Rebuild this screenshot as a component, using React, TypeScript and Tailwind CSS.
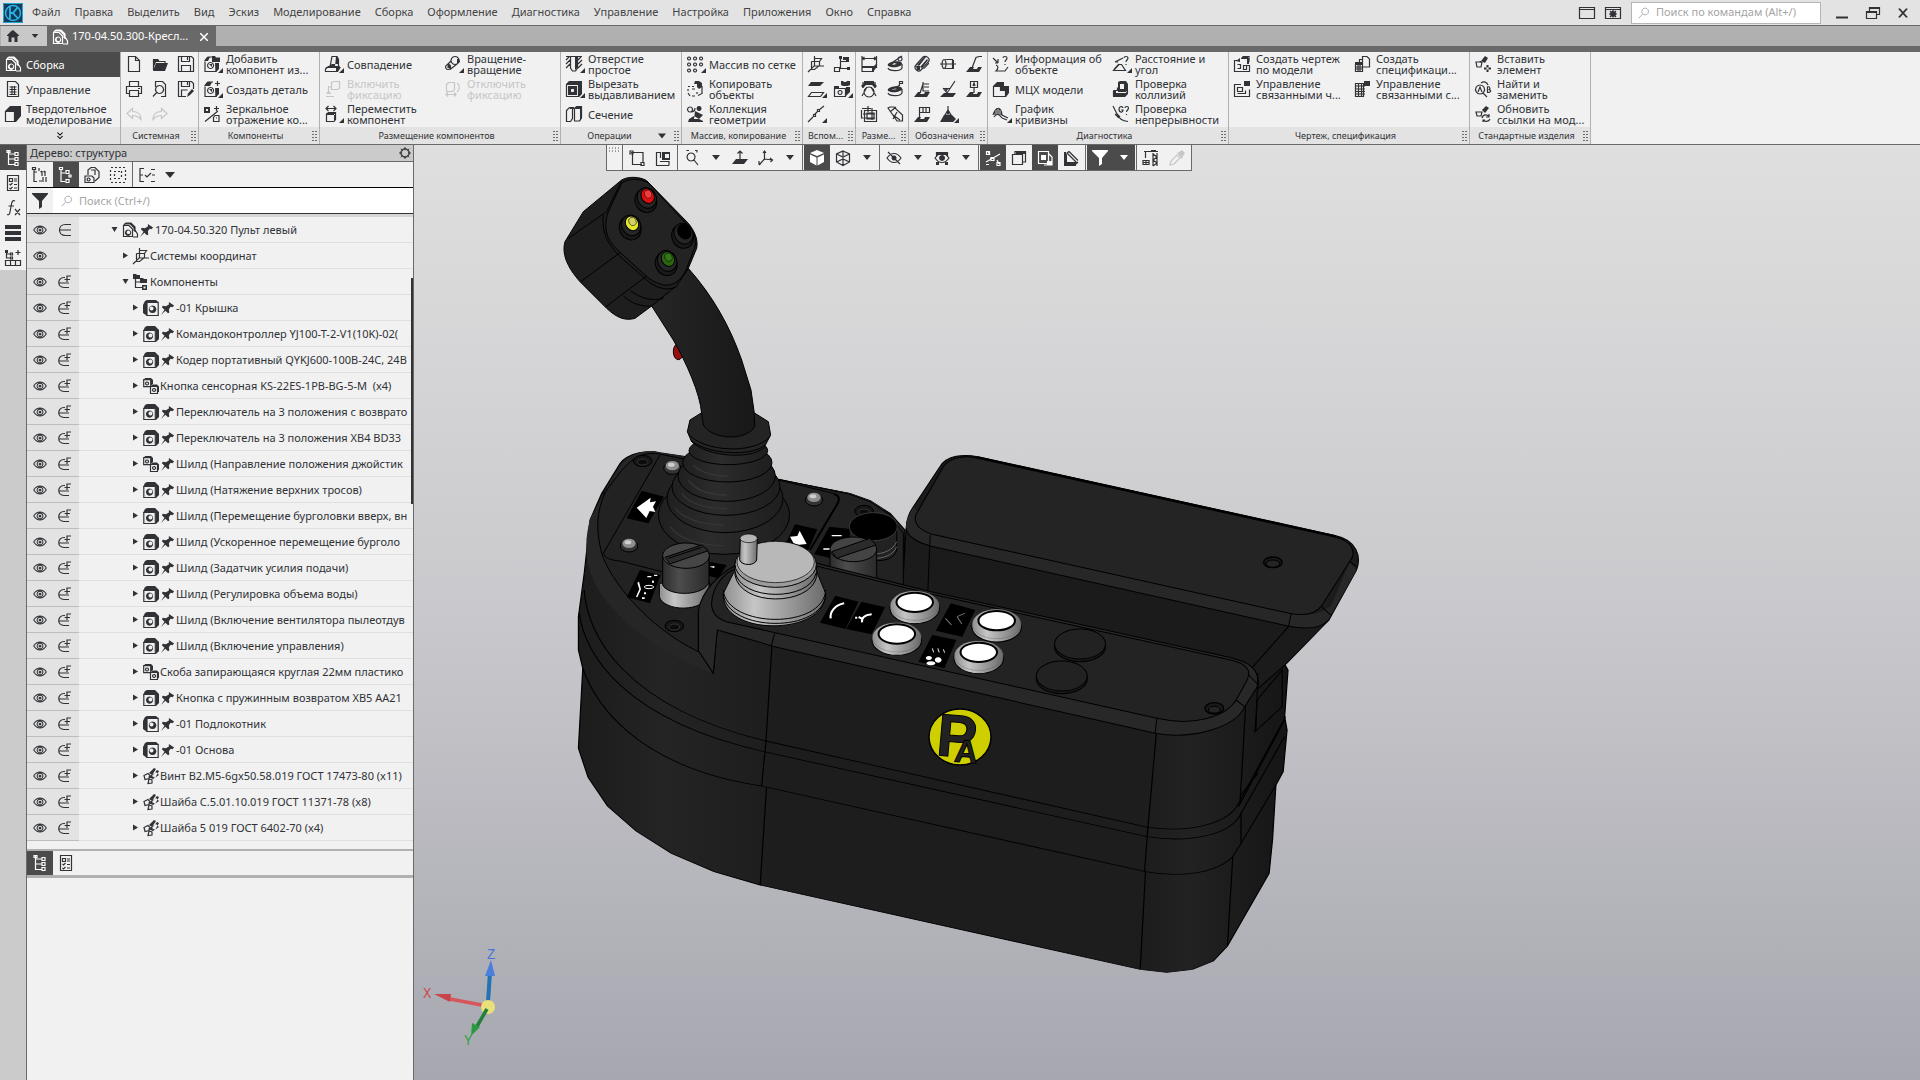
import React from 'react';
import { clsx } from 'clsx';

interface Glyph {
  s?: string;
  f?: string;
}

// s is stroked, f is filled, both on a 16x16 grid
const glyphs: Record<string, Glyph> = {
  assembly: { s: 'M1.5 3.5v11h9V7l-3.5-3.5zM1.5 3.5L4 1h5l4 4v5M13 8l2.5 4v3H11', f: 'M6 7.5a3.2 3.2 0 1 0 .1 0zM6.5 8.5a1.8 1.8 0 1 1-.1 0zM3 1h6l4 4v4h-1.5V6L8 2.5H2z' },
  sheet: { s: 'M2.5.5h8l3 3v12h-11zM4.5 6h7M4.5 8.5h7M4.5 11h7M4.5 13.5h7M7 5v9M9.5 5v9' },
  solid: { s: 'M.5 5.5h9v10h-9z', f: 'M0 5l5-5h11v10l-5 6H10V5z' },
  fileNew: { s: 'M2.5.5h7l4 4v11h-11zM9.5.5v4h4' },
  folder: { s: 'M1.5 14V3.5h4l1.5 2h6V8', f: 'M1 15L4 7h12l-3 8zM1 3h5l2 3H4L1 13z' },
  save: { s: 'M.5.5h13l2 2v13H.5zM3.5.5v5h8v-5M9.5 1v3M3.5 15.5v-6h9v6' },
  print: { s: 'M3.5 5V.5h9V5M3.5 12.5h-3v-7h15v7h-3M3.5 9.5h9v6h-9zM12 7.5h2' },
  preview: { s: 'M3.5 6V.5h7l3 3v12H9M7.5 4.5a4 4 0 1 0 .1 0zM5 11l-4 4.5' },
  saveAs: { s: 'M15.5 8V2.5l-2-2H.5v15H8M3.5.5v5h8v-5M3.5 15v-6h6M9.5 1v3', f: 'M9 16l1-3.5L14 8l2 2-4 4z' },
  undo: { s: 'M6.5 2.5L1 7.5l5.5 5V9.5c4 0 6 1 8.5 4 0-5-3-8-8.5-8z' },
  redo: { s: 'M9.5 2.5l5.5 5-5.5 5V9.5c-4 0-6 1-8.5 4 0-5 3-8 8.5-8z' },
  addPart: { s: 'M1 5.5v10h11V7M2 4l2-3h4M6.5 6.5a3 3 0 1 0 .1 0z', f: 'M8 0h3l1 1.5h4V6H8zM11 7h4v6l-3 3zM0 5l3-4h3L4 5zM5 8h3v3z' },
  newPart: { s: 'M1 5.5v10h11V9M2 4l2-3h5M6.5 6.5a3 3 0 1 0 .1 0zM13.5 0v5M11 2.5h5', f: 'M11 7h4v6l-3 3zM0 5l3-4h5L6 5zM5 8h3v3z' },
  mirror: { s: 'M1 15.5L14 5M12.5 0v5M10 2.5h5M9.5 15.5v-4l1.5-2h4v6zM12 12h1', f: 'M0 1h6v6H0zM2 3h2v2H2z' },
  coincide: { s: 'M5 11L7 .5h5l1.5 3V11M.5 13l3-2.5h9l2.5 1-2.5 4H.5z', f: 'M0 12l4-2 3-2h6l2 3-3 5h-1v-4zM11 1h2v9h-3z' },
  rotate: { s: 'M10 .5a4 4 0 1 0 .1 0zM3 8.5a2.5 2.5 0 1 0 .1 0zM6 5L2 9M12 8l-7 5.5', f: 'M2.5 8.5h3V12h-3zM12 3h2l1 3-3 2z' },
  fixOn: { s: 'M6.5 1.5l2-1h6v7l-2 1h-6zM3.5 5v8M1 15.5h8M1.5 13l2-2.5L6 13M3.5 6h3' },
  fixOff: { s: 'M1.5 3.5l2-2h6v7l-2 2h-6zM1 13.5h10M3 11.5l-2 2 2 2M9 11.5l2 2-2 2M12 2c3 2 3 6 0 9' },
  move: { s: 'M1 2.5h10M3.5 0L1 2.5 3.5 5M8.5 0L11 2.5 8.5 5M1.5 8l2-1.5h7v7L9 15.5H1.5z', f: 'M2 7h8v2H2zM9 8h2v5l-2 2z' },
  hole: { s: 'M0 .5h16M4.5 1v11l2 3h3l2-3V1M0 4l3-3M0 8l4-4M0 12l4-4M12 4l3-3M12 8l4-4M12 12l4-4', f: 'M9 1h2v11l-2 2z' },
  cut: { s: 'M.5 3.5h12v12H.5zM4.5 7.5h4v4h-4z', f: 'M0 3l3-3h13v13l-3 3V3zM2 5h9v9H2zm2 2v5h5V7z' },
  section: { s: 'M.5 4.5l3-3h3v11l-2 3h-4zM8.5 2.5l2-2h5v11l-2 3.5h-5z', f: 'M4 1h4v2H4zM10 1h6v11l-2 3V3h-5z' },
  grid: { s: 'M2 1a1.5 1.5 0 1 0 .1 0zM8 1a1.5 1.5 0 1 0 .1 0zM14 1a1.5 1.5 0 1 0 .1 0zM2 7a1.5 1.5 0 1 0 .1 0zM8 7a1.5 1.5 0 1 0 .1 0zM14 7a1.5 1.5 0 1 0 .1 0zM2 13a1.5 1.5 0 1 0 .1 0zM8 13a1.5 1.5 0 1 0 .1 0z' },
  copy: { s: 'M1 5.5h2M5 5.5h2M1 8v2M1 12l2 3M5 15h3M10 13v-2M8 8H5M10 5.5h5v7l-4 2', f: 'M8 0h4l3 2v4l-3 2-2-2V3H7z' },
  collection: { s: 'M3 1a2.5 2.5 0 1 0 .1 0zM4 6c3 0 4-2 4-4', f: 'M12 0a2.5 2.5 0 1 0 .1 0zM8 5l8 4-4 4H7zM2 13l5-3 5 3 4 2v1H1z' },
  axes: { s: 'M6.5 0v10M0 16l6-6h10M3.5 5.5h8l2-3h-7M11.5 5.5v4l-5 4h-3v-8' },
  csys: { s: 'M6.5 2v10M6.5 5.5H13M.5 11.5h5v4h-5zM6 12.5h9', f: 'M9 1h6v5h-3V4H9zM5 0h3v3H5zM13 11h3v3h-3z' },
  plane: { s: 'M3.5 11.5h12l-3 4H.5z', f: 'M3 1h13l-4 4H0z' },
  partIn: { s: 'M.5 7.5h11v8H.5zM6 9.5a2 2 0 1 0 .1 0z', f: 'M7 0h2l1 1h2l1-1h3v4l-2 1H9L7 4zM0 5h5v3H0zM12 6h4v5l-4 4z' },
  spline: { s: 'M0 16l5-5M6.5 8.5l3-3M11 4l5-4M5.5 8.5h2v2h-2zM9.5 3.5h2v2h-2z' },
  dim: { s: 'M1 0v15.5h12M15.5 0v12M1 2.5h14M3.5 1L1.5 2.5 3.5 4M13 1l2 1.5L13 4', f: 'M1 10h12l2-2v4l-3 4h-1v-4H1z' },
  diam: { s: 'M1 12c1 3 12 4 14 0V8M6 6l9-6M13 1a2 2 0 1 0 .1 0z', f: 'M1 8c2-3 12-4 14-1 1 3-6 5-11 4-2-.5-4-1-3-3zm4 1l5-1-3-1z' },
  angle: { s: 'M1 15l5-9M15 15L10 6M8 6a5 5 0 1 0 .1 0zM2 1v6M14 1v6', f: 'M3 0h10v2l3 3-2 2-3-3H5L2 7 0 5l3-3z' },
  radius: { s: 'M1 12c1 3 12 4 14 0V8M6 8l7-4M12.5 5V.5h3v2h-3', f: 'M1 8c2-3 12-4 14-1 1 3-6 5-11 4-2-.5-4-1-3-3zm4 1l5-1-3-1z' },
  dimBox: { s: 'M1 2.5h9M.5 4v8h2M3.5 4.5h12v11h-12zM6 7h7v6H6zM2 8h12M11 2v12M4 12h10M7 0v6' },
  wedge: { s: 'M1 2l9 13h5.5V9L7 1H3zM3 6L9 1M6 9l7 5M10 6l-4 7' },
  thread: { s: 'M2 9L9 1c3-2 7 1 6 4l-8 9c-3 3-8-2-5-5z', f: 'M3 9l7-8h2L5 10zM6 11l7-8 1 1-6 8zM9 13l6-7v2l-5 5zM2 10h4v4H3z' },
  axial: { s: 'M5.5 3.5h7v9h-7M0 8h16M4 3.5a2 4.5 0 1 0 .1 0z', f: 'M12 4h2v9h-2z' },
  leader: { s: 'M6 12l4-10.5L13 .5h3', f: 'M4 11h4l-1 2h4l1-2h4l-3 5H0z' },
  base: { s: 'M6 12l3-9h6M10 6h5M9 1v9h6', f: 'M4 11h3l-1 2h4l1-2h5l-3 5H0z' },
  rough: { s: 'M3 7l4 5 8-12M3 7.5h7', f: 'M4 12h12l-3 4H0zM5 8h3l-2 3z' },
  datum: { s: 'M4.5.5h7v6h-7zM8 7v5M7 4.5h2M7 5l1-3 1 3', f: 'M4 11h4l-1 2h4l1-2h4l-3 5H0z' },
  gdt: { s: 'M5.5 1.5h10v5h-10zM9 2v4M12 2v4M5.5 6v6', f: 'M4 11h3l-1 2h4l1-2h5l-3 5H0z' },
  weld: { s: 'M8 0v5M5 9l3-5 3 5z', f: 'M4 9h8l4 4-3 3H0zM7 5h2v3H7z' },
  info: { s: 'M0 2l5 5M5 7V3M5 7H2M10 2c0-2 4-2 4 0 0 2-2 2-2 4M12 8v1M3 9c3 1 2 4 0 6h9l3-4' },
  mcx: { s: 'M.5 5.5h7v4h5v6H.5z', f: 'M0 5l4-4h7v4h5v7l-3 4V9H8V5z' },
  curve: { s: 'M0 9c3-9 8-9 9 0l6 3M2 9V5M4 8V2M6 9V3M8 9V5M1 11c3-4 5-3 8 1M9 12l5 2' },
  measure: { s: 'M2 6l8-4M2 6h3M1 13.5L6 8M.5 14.5h12l-4-6H6zM11 2c0-2 4-2 4 0 0 2-2 2-2 4M13 8v1' },
  collision: { s: 'M.5 9.5h4v-3M.5 9.5v5h11l3-3V9', f: 'M5 1l2-1h6l2 3v6l-2 2H5zm2 2v5h4V3zM0 10h3v2h10l2-2v3l-3 3H0z' },
  continuity: { s: 'M0 0l4 8c2 5 6 7 11 7.5M2 8l4 4M4 8l3 3M10 2c0-2-4-2-4 1 0 4 4 4 4 1H8M12 2c0-2 3.5-2 3.5 0 0 2-2 2-2 4M13.5 8v1' },
  drawing: { s: 'M5.5 4.5H.5v11h15v-6h-4M3.5 12.5h3v-4h-3M9.5 9.5h3v4h-3zM7.5 2.5l2-2h5.5v5l-1.5 2', f: 'M7 3h6v5h2V2h-1V0H9zM2 5l4-3v4z' },
  linked: { s: 'M7 3.5H.5v12h15v-7M3.5 6.5h5v4h-5zM11.5 9.5v3h-8', f: 'M10 0h6v5h-6z' },
  spec: { s: 'M8 3.5H5.5V6M8.5 8.5h-7v7h7zM8.5.5H13l2.5 2.5v8h-7zM1.5 11h7M1.5 13h7M4 9v6M6 9v6', f: 'M1 6h7v3H1z' },
  specLink: { s: 'M1.5 2.5h8v13h-8zM2 5h9M2 8h9M2 10.5h9M2 13h9M4.5 3v12M7.5 3v12', f: 'M10 0h6v5h-6z' },
  insert: { s: 'M1 6h6l-1 5H2z', f: 'M6 5l4-5 3 2-3 5zM11.5 9h2v7h-2zM9 11.5h7v2H9zM4 5h3l-1 2z' },
  find: { s: 'M5 4a4.5 4.5 0 1 0 .1 0zM3 11l2-5 2 5M8 12l4 4M12.5 5.5v6c4 0 4-3 1-3 2 0 2-3-1-3M6 2c3-2 6-1 7 2' },
  refresh: { s: 'M1 6h6l-1 4H2zM7 12c1-4 6-4 7-1M15 13c-1 3-6 3-7 1M14 8v3h-3M8 16v-2h2', f: 'M7 4l4-4 3 2-4 5z' },
  tree: { s: 'M3.5 1v14M3.5 4h6M3.5 9h6M3.5 14.5h6M2 .5h3v2H2zM10 2.5h3v3h-3zM10 7.5h3v3h-3zM10 12.5h3v3h-3z' },
  props: { s: 'M2.5.5h11v15h-11zM4.5 3.5h3v3h-3zM9 4h3M9 6h3M4.5 9l1 1 2-2M9 9.5h3M4.5 13l1 1 2-2M9 13h3' },
  numTree: { s: 'M2 2v12.5h3M2 5h3M.5.5h3v2h-3zM7 1v3M10 4v5M13 4v5M14 10v5M7 14h3M11 10v5M8.5 5l1.5-1M11.5 5l1.5-1' },
  lineTree: { s: 'M3 2v12.5h4M3 6h4M1.5.5h3v2h-3zM8 3.5h3v3H8zM11 8h2v2h-2zM8 12.5h3v3H8z' },
  parts: { s: 'M1 15.5V9h7l2 2v4.5zM4 8V3l3-2.5h4l4 4v6L11 14M7 3h4v5M4.5 11a1.5 1.5 0 1 0 .1 0z' },
  dashBox: { s: 'M1 .5h2M5 .5h2M9 .5h2M13 .5h2M1 15.5h2M5 15.5h2M9 15.5h2M13 15.5h2M.5 3v2M.5 7v2M.5 11v2M15.5 3v2M15.5 7v2M15.5 11v2M4 4.5h2M8 4.5h2M4 11.5h2M8 11.5h2M4.5 7v2M11.5 4v2M11.5 8v2' },
  checks: { s: 'M1 1v14M1 1.5h4M1 8h3M1 14.5h4M6 8l2 2 4-4M12 2.5h4M13 8h3M12 14.5h4' },
  fx: { s: 'M10 1c-2-1-3 0-3.5 3L5 12c-.5 3-1.5 3-3 2.5M3.5 6H9M10 9l5 6M15 9l-5 6' },
  bars: { f: 'M0 0h16v4H0zM0 6h16v4H0zM0 12h16v4H0z' },
  treePlus: { s: 'M1.5 1v7h4M1.5 4h4M13 0v5M10.5 2.5h5M.5 10.5h15v5H.5zM5.5 11v4M10.5 11v4M5.5 3h2v2h-2zM5.5 7h2v2h-2z', f: 'M0 0h3v3H0z' },
  filter: { f: 'M0 0h16v1L10 8v6l-3 2V8L0 1z' },
  search: { s: 'M9.5 1.5a4.5 4.5 0 1 0 .1 0zM6 9.5L1 15' },
  gear: { s: 'M8 3a5 5 0 1 0 .1 0zM8 2.2a5.8 5.8 0 1 0 .1 0zM8 0v3M8 13v3M0 8h3M13 8h3M2.3 2.3l2.2 2.2M11.5 11.5l2.2 2.2M13.7 2.3l-2.2 2.2M4.5 11.5l-2.2 2.2' },
  eye: { s: 'M.8 8c4-6 10.4-6 14.4 0-4 6-10.4 6-14.4 0zM8 4.7a3.3 3.3 0 1 0 .1 0z', f: 'M8 6.5a1.6 1.6 0 1 0 .1 0z' },
  eyeOff: { s: 'M1 8c4-6 10-6 14 0-4 6-10 6-14 0zM2 2l12 12', f: 'M8 5.5a2.5 2.5 0 1 0 .1 0z' },
  eyeBox: { s: 'M1 8c4-6 10-6 14 0-4 6-10 6-14 0zM2.5 7V2.5h11V7M2 14h3M11 14h3', f: 'M8 5a3 3 0 1 0 .1 0zM2 2h12v3H2zM2 12h3v3H2zM11 12h3v3h-3z' },
  member: { s: 'M14 2.5H8.5c-8 0-8 11 0 11H14M3 8h11' },
  memberPlus: { s: 'M8 3.5H7C0 3.5 0 13.5 7 13.5h5M2 9h10M10 8V2h4M7.5 5.5H13' },
  pin: { f: 'M9 1l6 4-2 2-2-.5-2 3 .5 3.5L8 14 5 11l-5 5 4-6-3-3 1-1.500 3.500.500L9 4z' },
  part: { s: 'M.8 4.5h11.5v11H.8z', f: 'M0 5l2-4 2-1h8l4 4v9l-3 3V4.5zM6.5 6.5a3.6 3.6 0 1 0 .1 0zM7.5 7.5a2 2 0 1 1-.1 0z' },
  partLeft: { s: 'M4 2.5h11.2v13H4z', f: 'M0 5l2-4 2-1h9l3 2.5H4V16l-4-3zM9.5 5.5a3.8 3.8 0 1 0 .1 0zM8.5 6.5a2 2 0 1 0 .1 0z' },
  partPair: { s: 'M.7 1.7h7v7h-7zM7.5 8.5h7v7h-7zM4 4a1.5 1.5 0 1 0 .1 0zM11 10.5a1.5 1.5 0 1 0 .1 0z', f: 'M2 0h6l2 2v5H8V2H1zM9 6.5h5l2 2V14h-1V8.5H8z' },
  bolt: { s: 'M1 7.5l4-2 2 2-1 3-4 1zM6 11l3 1v3l-4 .5z', f: 'M6 5l5-5 2 1-4 6zM9 8l5-6 2 1-4 7zM5 9l8-5 3 3-6 4z' },
  compTree: { s: 'M2.5 3v10.5h7M2.5 8h6', f: 'M0 0h3l1 1h3v4H0zM7 4h3l1 1h3v4H7zM9 11h5v5H9zm1.5 1.5v2h2v-2z' },
  rectSel: { s: 'M3.5 2v12.5H13M2 2.5h12v10M1 1h3v3H1zM12 12.5h3v3h-3z' },
  layout: { s: 'M1.5 2v13.5H14M1.5 2.5h4V8M5 11.5h9v4', f: 'M7 2h8v8H7zM10 4v4h4V4z' },
  zoomSel: { s: 'M7 3a4 4 0 1 0 .1 0zM10 10l4 5M3 1V.5h2M11 .5h2v2' },
  orient: { s: 'M8 9V1M5.5 3.5L8 1l2.5 2.5', f: 'M4 9h12l-4 5H0z' },
  triad: { s: 'M6.5 9V1M6.5 9L1 15M6.5 9l8 1M5 3l1.5-2L8 3M3 14H1v-3M12 8l2.5 2-2 2' },
  cube: { f: 'M8 0l7 3-7 3-7-3zM1 4.5l6.5 3v8L1 12zM15 4.5l-6.5 3v8L15 12z' },
  wire: { s: 'M8 1l6.5 3v8L8 15.5 1.5 12V4zM1.5 4L8 7l6.5-3M8 7v8M8 1v5M1.5 12L8 9l6.5 3' },
  nodes: { s: 'M1 12l14-8M3 2l2 3M12 10l2 4M1.5 1.5h3v3h-3zM6 7.5h3v3H6zM12 12.5h3v3h-3zM1 14.5h3' },
  layers: { s: 'M1.5 4.5h10v10h-10zM4 4V1.5h10.5V12H12', f: 'M5 2h9v2H5z' },
  clip: { s: 'M1.5 1.5h10v12h-10zM12 4l3 3v8H7', f: 'M4 5h5v5H4zM10 11h5v4h-5z' },
  dimL: { s: 'M4 3l10 10M6 1.5l9 9M4 3l2-1.5M13 14l2-2', f: 'M1 2h2l1 3v7h9v4H1z' },
  crane: { s: 'M1 1.5h14M2.5 2v6M10 3v13M14 3v13M10 4l4 3-4 3 4 3-4 3M0 10.5h6v4H0zM3 10v4M0 12.5h6', f: 'M8 0h5v2H8z' },
  pen: { s: 'M1 15l1-4 6-6 3 3-6 6z', f: 'M8 3l2-1 3-2 3 3-2 3-1 3z' },
  home: { f: 'M0 7l5-5 3-2 8 7v1h-2v8h-4v-6H6v6H2V8H0z' },
  window: { s: 'M.5 2.5h15v11H.5zM.5 4.5h15' },
  windowGear: { s: 'M.5 2.5h15v11H.5zM.5 4.5h15M8 5v7.5M4 9h8M5 6l6 6M11 6l-6 6', f: 'M8 6a3 3 0 1 0 .1 0zM8 8a1 1 0 1 0 .1 0z' },
  restore: { s: 'M1.5 6.5h10v7h-10zM1.5 7.5h10M4.5 6V2.5h10v7H12M4.5 3.5h10' },
  closeX: { s: 'M3 3l9 10M12 3L3 13M4 3l9 10M13 3L4 13' },
  minus: { s: 'M2 12h12M2 13h12' },
  chevrons: { s: 'M5 4l3 3 3-3M5 8l3 3 3-3' },
};

interface IconProps {
  name: string;
  corner?: boolean;
  className?: string;
}

const Icon: React.FC<IconProps> = ({ name, corner, className = 'w-4 h-4' }) => {
  const glyph = glyphs[name];
  return (
    <svg viewBox="0 0 16 16" className={clsx('shrink-0 overflow-visible', className)} aria-hidden="true">
      {glyph.f && <path d={glyph.f} fill="currentColor" fillRule="evenodd" />}
      {glyph.s && <path d={glyph.s} fill="none" stroke="currentColor" strokeWidth="1.2" />}
      {corner && <path d="M19 12v5h-5z" fill="currentColor" />}
    </svg>
  );
};

const Caret: React.FC<{ className?: string }> = ({ className = 'w-2.5 h-1.5' }) => (
  <svg viewBox="0 0 10 6" className={clsx('shrink-0', className)} aria-hidden="true">
    <path d="M0 0h10L5 6z" fill="currentColor" />
  </svg>
);

const Grip: React.FC = () => (
  <svg viewBox="0 0 5 10" className="w-[5px] h-2.5 shrink-0" aria-hidden="true">
    <path d="M1 0v10M4 0v10" stroke="#444" strokeWidth="1.5" strokeDasharray="1 2" />
  </svg>
);

const menuItems = [
  'Файл', 'Правка', 'Выделить', 'Вид', 'Эскиз', 'Моделирование', 'Сборка', 'Оформление',
  'Диагностика', 'Управление', 'Настройка', 'Приложения', 'Окно', 'Справка',
];

interface Tool {
  icon: string;
  label?: string;
  corner?: boolean;
  off?: boolean;
}

interface ToolGroup {
  title: string;
  width: string;
  caret?: boolean;
  columns: Tool[][];
}

const groups: ToolGroup[] = [
  {
    title: 'Системная',
    width: 'w-[78px]',
    columns: [
      [{ icon: 'fileNew' }, { icon: 'print' }, { icon: 'undo', off: true }],
      [{ icon: 'folder' }, { icon: 'preview' }, { icon: 'redo', off: true }],
      [{ icon: 'save' }, { icon: 'saveAs' }],
    ],
  },
  {
    title: 'Компоненты',
    width: 'w-[121px]',
    columns: [[
      { icon: 'addPart', label: 'Добавить\nкомпонент из...', corner: true },
      { icon: 'newPart', label: 'Создать деталь', corner: true },
      { icon: 'mirror', label: 'Зеркальное\nотражение ко...' },
    ]],
  },
  {
    title: 'Размещение компонентов',
    width: 'w-[241px]',
    columns: [
      [
        { icon: 'coincide', label: 'Совпадение', corner: true },
        { icon: 'fixOn', label: 'Включить\nфиксацию', off: true },
        { icon: 'move', label: 'Переместить\nкомпонент', corner: true },
      ],
      [
        { icon: 'rotate', label: 'Вращение-\nвращение', corner: true },
        { icon: 'fixOff', label: 'Отключить\nфиксацию', off: true },
      ],
    ],
  },
  {
    title: 'Операции',
    width: 'w-[121px]',
    caret: true,
    columns: [[
      { icon: 'hole', label: 'Отверстие\nпростое', corner: true },
      { icon: 'cut', label: 'Вырезать\nвыдавливанием', corner: true },
      { icon: 'section', label: 'Сечение' },
    ]],
  },
  {
    title: 'Массив, копирование',
    width: 'w-[121px]',
    columns: [[
      { icon: 'grid', label: 'Массив по сетке', corner: true },
      { icon: 'copy', label: 'Копировать\nобъекты' },
      { icon: 'collection', label: 'Коллекция\nгеометрии' },
    ]],
  },
  {
    title: 'Вспом...',
    width: 'w-[53px]',
    columns: [
      [{ icon: 'axes' }, { icon: 'plane', corner: true }, { icon: 'spline', corner: true }],
      [{ icon: 'csys' }, { icon: 'partIn', corner: true }],
    ],
  },
  {
    title: 'Разме...',
    width: 'w-[53px]',
    columns: [
      [{ icon: 'dim' }, { icon: 'angle' }, { icon: 'dimBox' }],
      [{ icon: 'diam' }, { icon: 'radius' }, { icon: 'wedge' }],
    ],
  },
  {
    title: 'Обозначения',
    width: 'w-[79px]',
    columns: [
      [{ icon: 'thread' }, { icon: 'base' }, { icon: 'gdt' }],
      [{ icon: 'axial' }, { icon: 'rough' }, { icon: 'weld', corner: true }],
      [{ icon: 'leader' }, { icon: 'datum' }],
    ],
  },
  {
    title: 'Диагностика',
    width: 'w-[241px]',
    columns: [
      [
        { icon: 'info', label: 'Информация об\nобъекте' },
        { icon: 'mcx', label: 'МЦХ модели' },
        { icon: 'curve', label: 'График\nкривизны', corner: true },
      ],
      [
        { icon: 'measure', label: 'Расстояние и\nугол', corner: true },
        { icon: 'collision', label: 'Проверка\nколлизий' },
        { icon: 'continuity', label: 'Проверка\nнепрерывности' },
      ],
    ],
  },
  {
    title: 'Чертеж, спецификация',
    width: 'w-[241px]',
    columns: [
      [
        { icon: 'drawing', label: 'Создать чертеж\nпо модели' },
        { icon: 'linked', label: 'Управление\nсвязанными ч...' },
      ],
      [
        { icon: 'spec', label: 'Создать\nспецификаци...' },
        { icon: 'specLink', label: 'Управление\nсвязанными с...' },
      ],
    ],
  },
  {
    title: 'Стандартные изделия',
    width: 'w-[121px]',
    columns: [[
      { icon: 'insert', label: 'Вставить\nэлемент' },
      { icon: 'find', label: 'Найти и\nзаменить' },
      { icon: 'refresh', label: 'Обновить\nссылки на мод...' },
    ]],
  },
];

const modes = [
  { icon: 'assembly', label: 'Сборка', active: true },
  { icon: 'sheet', label: 'Управление', active: false },
  { icon: 'solid', label: 'Твердотельное\nмоделирование', active: false },
];

const ToolButton: React.FC<{ tool: Tool }> = ({ tool }) => (
  <button
    type="button"
    disabled={tool.off}
    aria-label={tool.label ?? tool.icon}
    className={clsx(
      'flex h-[25px] items-center gap-px whitespace-pre pb-px text-left text-[11px] leading-[11px]',
      tool.off ? 'text-[#c6c6c6]' : 'text-[#303236]'
    )}
  >
    <span className="flex w-[26px] shrink-0 justify-center">
      <Icon name={tool.icon} corner={tool.corner} />
    </span>
    {tool.label}
  </button>
);

const Ribbon: React.FC = () => (
  <div className="flex h-[93px] shrink-0 border-b border-[#696969] bg-[#f1f1f1]">
    <div className="flex w-[121px] shrink-0 flex-col border-r border-[#b0b0b0]">
      {modes.map((mode) => (
        <button
          key={mode.label}
          type="button"
          className={clsx(
            'flex h-[25px] items-center whitespace-pre pb-px text-left text-[11px] leading-[11px]',
            mode.active ? 'bg-[#4b4b4b] text-white' : 'text-[#303236]'
          )}
        >
          <span className="flex w-[26px] shrink-0 justify-center">
            <Icon name={mode.icon} />
          </span>
          {mode.label}
        </button>
      ))}
      <div className="flex flex-1 items-center justify-center bg-[#e3e3e3]">
        <Icon name="chevrons" className="w-3.5 h-3.5" />
      </div>
    </div>
    {groups.map((group) => (
      <div key={group.title} className={clsx('flex shrink-0 flex-col border-r border-[#b0b0b0]', group.width)}>
        <div className="flex h-[75px]">
          {group.columns.map((column, index) => (
            <div key={index} className={column[0].label ? 'w-[120px]' : 'w-[26px]'}>
              {column.map((tool) => (
                <ToolButton key={tool.icon} tool={tool} />
              ))}
            </div>
          ))}
        </div>
        <div className="flex flex-1 items-center bg-[#e3e3e3] pr-0.5 text-[9px] text-[#303236]">
          <span className="flex-1 whitespace-nowrap pt-px text-center">{group.title}</span>
          {group.caret && <Caret className="mr-2 h-1.5 w-2" />}
          <Grip />
        </div>
      </div>
    ))}
  </div>
);

const TitleBar: React.FC = () => (
  <header className="flex h-[26px] shrink-0 items-center border-b border-[#696969] bg-[#e3e3e3] pl-[3px] text-[11px] text-[#444]">
    <svg viewBox="0 0 20 20" className="w-5 h-5 shrink-0" aria-hidden="true">
      <path d="M0 0h20v20H0z" fill="#123c57" />
      <path d="M.5.5h19v19H.5z" fill="none" stroke="#29a3d6" />
      <circle cx="10" cy="10" r="7.5" fill="none" stroke="#29b4ea" strokeWidth="1.5" />
      <path d="M7 4v12M7 10h3M14.5 4.5L10 10l5 5.5" fill="none" stroke="#29b4ea" strokeWidth="1.8" />
    </svg>
    <nav className="flex gap-3.5 pl-[9px]">
      {menuItems.map((item) => (
        <button key={item} type="button">{item}</button>
      ))}
    </nav>
    <div className="ml-auto flex items-center text-[#303236]">
      <button type="button" aria-label="Окно" className="mr-2.5"><Icon name="window" /></button>
      <button type="button" aria-label="Настройка окна" className="mr-2.5"><Icon name="windowGear" /></button>
      <label className="flex h-[22px] w-[190px] items-center border border-[#b5b5b5] bg-white pl-1.5 text-[#a5a5a5]">
        <Icon name="search" className="w-3 h-3" />
        <input
          aria-label="Поиск по командам"
          placeholder="Поиск по командам (Alt+/)"
          className="w-full bg-transparent pl-1.5 text-[11px] outline-none placeholder:text-[#a5a5a5]"
        />
      </label>
      <button type="button" aria-label="Свернуть" className="ml-[13px]"><Icon name="minus" /></button>
      <button type="button" aria-label="Восстановить" className="ml-[15px]"><Icon name="restore" /></button>
      <button type="button" aria-label="Закрыть" className="ml-[15px] mr-2.5"><Icon name="closeX" className="w-3.5 h-3.5" /></button>
    </div>
  </header>
);

const DocumentTabs: React.FC = () => (
  <div className="flex h-[26px] shrink-0 border-b-[6px] border-[#696969] bg-[#b0b0b0] pl-px">
    <button type="button" aria-label="Главная" className="flex w-[46px] items-center gap-3 bg-[#c8c8c8] pl-1.5 text-[#303236]">
      <Icon name="home" className="w-3 h-3" />
      <Caret className="h-1 w-2" />
    </button>
    <div className="flex w-[169px] items-center bg-[#696969] pl-[5px] pt-px text-[11px] text-white">
      <Icon name="assembly" />
      <span className="flex-1 whitespace-nowrap pl-1">170-04.50.300-Кресл...</span>
      <button type="button" aria-label="Закрыть вкладку" className="pr-2">
        <svg viewBox="0 0 8 8" className="w-2 h-2" aria-hidden="true">
          <path d="M0 0l8 8M8 0L0 8" stroke="#fff" strokeWidth="1.5" />
        </svg>
      </button>
    </div>
  </div>
);

interface TreeRow {
  label: string;
  icon: string;
  level: number;
  open?: boolean;
  pin?: boolean;
  member?: string;
}

const treeRows: TreeRow[] = [
  { label: '170-04.50.320 Пульт левый', icon: 'assembly', level: 0, open: true, pin: true, member: 'member' },
  { label: 'Системы координат', icon: 'axes', level: 1 },
  { label: 'Компоненты', icon: 'compTree', level: 1, open: true, member: 'memberPlus' },
  { label: '-01 Крышка', icon: 'partLeft', level: 2, pin: true, member: 'memberPlus' },
  { label: 'Командоконтроллер YJ100-T-2-V1(10K)-02(', icon: 'part', level: 2, pin: true, member: 'memberPlus' },
  { label: 'Кодер портативный QYKJ600-100B-24C, 24В', icon: 'part', level: 2, pin: true, member: 'memberPlus' },
  { label: 'Кнопка сенсорная KS-22ES-1PB-BG-5-M  (x4)', icon: 'partPair', level: 2, member: 'memberPlus' },
  { label: 'Переключатель на 3 положения с возврато', icon: 'part', level: 2, pin: true, member: 'memberPlus' },
  { label: 'Переключатель на 3 положения XB4 BD33', icon: 'part', level: 2, pin: true, member: 'memberPlus' },
  { label: 'Шилд (Направление положения джойстик', icon: 'partPair', level: 2, pin: true, member: 'memberPlus' },
  { label: 'Шилд (Натяжение верхних тросов)', icon: 'part', level: 2, pin: true, member: 'memberPlus' },
  { label: 'Шилд (Перемещение бурголовки вверх, вн', icon: 'part', level: 2, pin: true, member: 'memberPlus' },
  { label: 'Шилд (Ускоренное перемещение бурголо', icon: 'part', level: 2, pin: true, member: 'memberPlus' },
  { label: 'Шилд (Задатчик усилия подачи)', icon: 'part', level: 2, pin: true, member: 'memberPlus' },
  { label: 'Шилд (Регулировка объема воды)', icon: 'part', level: 2, pin: true, member: 'memberPlus' },
  { label: 'Шилд (Включение вентилятора пылеотдув', icon: 'part', level: 2, pin: true, member: 'memberPlus' },
  { label: 'Шилд (Включение управления)', icon: 'part', level: 2, pin: true, member: 'memberPlus' },
  { label: 'Скоба запирающаяся круглая 22мм пластико', icon: 'partPair', level: 2, member: 'memberPlus' },
  { label: 'Кнопка с пружинным возвратом XB5 AA21', icon: 'part', level: 2, pin: true, member: 'memberPlus' },
  { label: '-01 Подлокотник', icon: 'partLeft', level: 2, pin: true, member: 'memberPlus' },
  { label: '-01 Основа', icon: 'partLeft', level: 2, pin: true, member: 'memberPlus' },
  { label: 'Винт В2.М5-6gx50.58.019 ГОСТ 17473-80 (x11)', icon: 'bolt', level: 2, member: 'memberPlus' },
  { label: 'Шайба C.5.01.10.019 ГОСТ 11371-78 (x8)', icon: 'bolt', level: 2, member: 'memberPlus' },
  { label: 'Шайба 5 019 ГОСТ 6402-70 (x4)', icon: 'bolt', level: 2, member: 'memberPlus' },
];

const indents = ['pl-8', 'pl-[43px]', 'pl-[53px]'];

const TreeItem: React.FC<{ row: TreeRow }> = ({ row }) => (
  <li className="flex h-[26px]">
    <div className="flex w-[52px] shrink-0 items-center border-b border-[#bdbdbd] bg-[#e3e3e3]">
      <button type="button" aria-label="Видимость" className="flex w-[26px] justify-center">
        <Icon name="eye" className="w-3.5 h-3.5" />
      </button>
      <span className="flex w-6 justify-center">{row.member && <Icon name={row.member} />}</span>
    </div>
    <div className={clsx('flex min-w-0 flex-1 items-center overflow-hidden border-b border-[#dfdfdf]', indents[row.level])}>
      <svg viewBox="0 0 7 7" className="mr-1 w-[7px] h-[7px] shrink-0" aria-hidden="true">
        <path d={row.open ? 'M.5 1h6L3.5 6z' : 'M1 .5L6 3.5 1 6.5z'} fill="currentColor" />
      </svg>
      <Icon name={row.icon} />
      {row.pin && <Icon name="pin" className="ml-0.5 w-3.5 h-3.5" />}
      <span className="whitespace-pre pl-px">{row.label}</span>
    </div>
  </li>
);

const railIcons = ['tree', 'props', 'fx', 'bars', 'treePlus'];
const panelTools = ['numTree', 'lineTree', 'parts', 'dashBox'];

const SidePanel: React.FC = () => (
  <>
    <div className="w-[27px] shrink-0 border-r border-[#696969] bg-[#cbcbcb]">
      {railIcons.map((icon, index) => (
        <button
          key={icon}
          type="button"
          aria-label={icon}
          className={clsx(
            'flex h-[25px] w-[26px] items-center justify-center',
            index === 0 ? 'bg-[#4b4b4b] text-white' : 'bg-[#f1f1f1] text-[#303236]'
          )}
        >
          <Icon name={icon} />
        </button>
      ))}
    </div>
    <aside className="flex w-[387px] shrink-0 flex-col border-r border-[#696969] bg-[#f1f1f1] text-[11px] leading-4 text-[#303236]">
      <div className="flex h-[17px] shrink-0 items-center justify-between border-b border-[#696969] bg-[#cbcbcb] pl-[3px] pr-0.5">
        <h2>Дерево: структура</h2>
        <Icon name="gear" className="w-3 h-3" />
      </div>
      <div className="flex h-[26px] shrink-0 border-b border-black">
        {panelTools.map((icon) => (
          <button
            key={icon}
            type="button"
            aria-label={icon}
            className={clsx('flex w-[26px] items-center justify-center', icon === 'lineTree' && 'bg-[#4b4b4b] text-white')}
          >
            <Icon name={icon} />
          </button>
        ))}
        <button type="button" aria-label="Состав" className="ml-px flex items-center gap-2.5 border-l border-[#696969] pl-1.5">
          <Icon name="checks" />
          <Caret />
        </button>
      </div>
      <label className="flex h-[26px] shrink-0 items-center border-b border-[#303236] bg-white">
        <span className="flex h-full w-[26px] shrink-0 items-center justify-center bg-[#f1f1f1]"><Icon name="filter" /></span>
        <Icon name="search" className="ml-2 w-3 h-3 text-[#a5a5a5]" />
        <input
          aria-label="Поиск"
          placeholder="Поиск (Ctrl+/)"
          className="w-full bg-transparent pl-1.5 text-[11px] outline-none placeholder:text-[#a5a5a5]"
        />
      </label>
      <div className="h-[3px] shrink-0 bg-[#d6d6d6]" />
      <div className="relative">
        <ul>
          {treeRows.map((row, index) => (
            <TreeItem key={index} row={row} />
          ))}
        </ul>
        <div className="absolute right-0 top-[61px] h-[226px] w-0.5 bg-[#303236]" />
      </div>
      <div className="mt-2 flex h-[29px] shrink-0 border-b-[3px] border-t-2 border-[#b0b0b0]">
        <button type="button" aria-label="Дерево" className="flex w-[26px] items-center justify-center bg-[#4b4b4b] text-white">
          <Icon name="tree" />
        </button>
        <button type="button" aria-label="Параметры" className="flex w-[26px] items-center justify-center">
          <Icon name="props" />
        </button>
      </div>
    </aside>
  </>
);

interface ViewTool {
  icon: string;
  caret?: boolean;
  dark?: boolean;
  off?: boolean;
}

const viewTools: ViewTool[][] = [
  [{ icon: 'rectSel' }, { icon: 'layout' }],
  [{ icon: 'zoomSel', caret: true }, { icon: 'orient' }, { icon: 'triad', caret: true }],
  [{ icon: 'cube', dark: true }, { icon: 'wire', caret: true }],
  [{ icon: 'eyeOff', caret: true }, { icon: 'eyeBox', caret: true }],
  [{ icon: 'nodes', dark: true }, { icon: 'layers' }, { icon: 'clip', dark: true }, { icon: 'dimL' }],
  [{ icon: 'filter', caret: true, dark: true }],
  [{ icon: 'crane' }, { icon: 'pen', off: true }],
];

const ViewToolbar: React.FC = () => (
  <div className="relative ml-[192px] flex h-[26px] w-fit border-b border-l border-[#696969] bg-[#f1f1f1] text-[#303236]">
    <span className="flex w-4 justify-center border-r border-[#696969] pt-0.5">
      <svg viewBox="0 0 12 6" className="h-1.5 w-3" aria-hidden="true">
        <path d="M0 1h12M0 4h12" stroke="#444" strokeDasharray="1 2" />
      </svg>
    </span>
    {viewTools.map((group, index) => (
      <div key={index} className="flex border-r border-[#696969] px-px">
        {group.map((tool) => (
          <button
            key={tool.icon}
            type="button"
            disabled={tool.off}
            aria-label={tool.icon}
            className={clsx('flex items-center', tool.dark && 'bg-[#4b4b4b] text-white', tool.off && 'text-[#c6c6c6]')}
          >
            <span className="flex w-[26px] justify-center"><Icon name={tool.icon} /></span>
            {tool.caret && <span className="flex w-[22px] justify-center"><Caret className="w-2 h-[5px]" /></span>}
          </button>
        ))}
      </div>
    ))}
  </div>
);

const whiteButtons = [[217, 487], [455, 542], [165, 582], [403, 637]];
const blankCaps = [[697, 612], [644, 708]];
const bellows = [
  [492, 255, 197, 118], [495, 205, 174, 103], [498, 170, 162, 86],
  [500, 138, 146, 76], [502, 98, 134, 58], [505, 62, 118, 42],
];
const headButtons = [
  { x: 323, y: 108, fill: '#e01010', top: '#f03c3c' },
  { x: 276, y: 190, fill: '#e6e62a', top: '#d2d264' },
  { x: 433, y: 215, fill: '#000', top: '#000' },
  { x: 384, y: 297, fill: '#2c6410', top: '#34761a' },
];

const ControlPanelModel: React.FC = () => (
  <svg
    viewBox="414 145 1506 935"
    preserveAspectRatio="xMinYMin slice"
    className="absolute inset-0 h-full w-full"
    role="img"
    aria-label="Пульт левый"
  >
    <defs>
      <linearGradient id="side" x1="0" x2="1">
        <stop offset="0" stopColor="#1c1c1c" />
        <stop offset=".12" stopColor="#242424" />
        <stop offset=".28" stopColor="#1d1d1d" />
        <stop offset=".8" stopColor="#1d1d1d" />
        <stop offset=".86" stopColor="#222" />
        <stop offset="1" stopColor="#151515" />
      </linearGradient>
      <linearGradient id="stick" x1="0" x2="1">
        <stop offset="0" stopColor="#262626" />
        <stop offset=".6" stopColor="#1d1d1d" />
        <stop offset="1" stopColor="#181818" />
      </linearGradient>
      <linearGradient id="rubber" x1="0" x2="1">
        <stop offset="0" stopColor="#202020" />
        <stop offset=".4" stopColor="#2c2c2c" />
        <stop offset="1" stopColor="#1e1e1e" />
      </linearGradient>
      <linearGradient id="steel" x1="0" x2="1">
        <stop offset="0" stopColor="#8f8f8f" />
        <stop offset=".3" stopColor="#c6c6c6" />
        <stop offset=".75" stopColor="#8c8c8c" />
        <stop offset="1" stopColor="#6a6a6a" />
      </linearGradient>
      <linearGradient id="knob" x1="0" x2="1">
        <stop offset="0" stopColor="#2c2c2c" />
        <stop offset=".35" stopColor="#4d4d4d" />
        <stop offset="1" stopColor="#2a2a2a" />
      </linearGradient>
    </defs>

    {/* Housing */}
    <g transform="translate(560 640) scale(.4847 .33333)" stroke="#000" strokeWidth="2.5" fill="none">
      <path
        d="M47 85L38 30V-70L50-200 62-360 86-440 124-530C140-560 180-572 206-562L261-550 450-482 598-440 640-418 681-380 712-330 708-165 766-140 1409 60 1441 140 1490 60 1502 90 1495 230 1500 270 1492 395 1477 435 1470 600 1463 700 1377 918 1348 963 1305 988 1252 997 1197 988 413 735 318 695 230 640 157 573 98 498 58 412 38 325z"
        fill="url(#side)"
      />
      <path d="M50-150C55-20 130 200 425 303L1213 562C1300 580 1380 550 1400 490L1497 230" />
      <path d="M40-80C50 40 130 240 421 335L1211 590C1300 610 1385 585 1405 520L1495 290" />
      <path d="M47 85C70 180 150 380 416 438L1208 695C1270 712 1350 705 1388 650L1405 610 1477 435" />
      <path d="M438 0L425 303 416 438M426 443L413 735M1233 235L1213 562 1206 695M1208 695L1197 988M1415 185L1403 490M1388 650L1377 918M1405 520V610" />
      <path d="M1400 500L1495 240M1402 470L1440 400M1434 275L1438 180 1490 90V200z" />
    </g>

    {/* Armrest */}
    <g transform="translate(840 440) scale(.34437 .33333)" stroke="#000" strokeWidth="3" fill="none">
      <path
        d="M182 440L192 265C192 240 203 215 210 205L290 80C310 45 360 42 400 50L1440 287C1500 300 1515 350 1500 390L1420 540 1297 670 1215 745 1130 655 265 458z"
        fill="#1b1b1b"
      />
      <path d="M192 265C190 240 205 215 215 200L268 283C800 400 1000 450 1305 520 1400 535 1410 500 1425 500L1480 365 1500 390 1420 535C1400 565 1350 570 1300 558L262 318C220 300 195 290 192 265z" fill="#272727" stroke="none" />
      <path d="M192 265C195 290 220 305 262 318L1300 558C1350 570 1400 565 1420 540M262 285L255 455M1310 522L1302 560 1195 685M1480 365L1500 380M1395 497L1425 525" />
      <path
        d="M220 225L300 80C320 50 370 45 400 55L1440 292C1490 305 1500 340 1480 365L1400 495C1380 525 1340 527 1305 520L268 283C225 268 215 245 220 225z"
        fill="#242424"
      />
      <path d="M400 52L1440 289" strokeWidth="6" />
      <ellipse cx="1257" cy="367" rx="27" ry="16" fill="#1a1a1a" strokeWidth="4" />
      <ellipse cx="1257" cy="371" rx="20" ry="11" fill="#242424" />
    </g>

    {/* Upper deck */}
    <g transform="translate(560 430) scale(.33333)" stroke="#000" strokeWidth="3" fill="none">
      <path d="M92 262C72 330 72 400 110 470 180 590 340 690 460 730L480 600 760 400 1030 465V300C1000 260 960 225 930 212L870 190 655 148 300 68C220 55 190 80 135 188z" fill="#262626" stroke="none" />
      <path d="M135 188C108 250 108 300 125 370 150 450 260 590 415 665L420 540 500 430 770 400 1030 465V310L990 255 930 215 870 193 300 72C230 62 200 95 135 188z" fill="#222" />
      <path d="M300 75L130 370C135 385 150 390 180 393L520 480M655 150L820 190C835 195 840 205 833 218L755 350" />
      <path d="M822 192C838 197 840 208 832 222L750 360" strokeWidth="6" />
      <path d="M125 190L135 188M415 540V662L460 730 472 600" />
      {[[248, 93], [912, 243], [343, 588]].map(([x, y]) => (
        <g key={x}>
          <ellipse cx={x} cy={y} rx="28" ry="17" fill="#161616" />
          <ellipse cx={x} cy={y + 3} rx="16" ry="9" fill="#0c0c0c" stroke="#333" />
        </g>
      ))}
      {[[337, 110], [762, 205], [207, 343]].map(([x, y]) => (
        <g key={x}>
          <ellipse cx={x} cy={y + 5} rx="26" ry="18" fill="#333" />
          <ellipse cx={x} cy={y - 3} rx="20" ry="14" fill="#8e8e8e" stroke="none" />
          <ellipse cx={x - 3} cy={y - 6} rx="10" ry="6" fill="#cfcfcf" stroke="none" />
        </g>
      ))}
      {bellows.map(([cx, cy, rx, ry]) => (
        <ellipse key={cy} cx={cx} cy={cy} rx={rx} ry={ry} fill="url(#rubber)" />
      ))}
      <g stroke="#363636" strokeWidth="4">
        <path d="M330 290C360 330 420 345 490 347M345 235C375 270 430 283 490 286M365 190C390 225 440 235 500 236M385 150C410 185 450 194 500 195M400 105C425 130 460 138 505 139" />
      </g>
      <g fill="#000" stroke="none">
        <path d="M245 182L312 200 285 245 265 280 200 265zM705 283L772 298 745 360 675 345zM808 290L900 300 860 395 762 373zM240 420L302 435 270 520 200 502zM430 392L500 405 475 445 445 437z" />
      </g>
      <g fill="#fff" stroke="none">
        <path d="M230 233L272 203 270 217 288 214 279 230 286 246 269 243 259 264zM690 320L712 318 719 302 740 342 704 346z" />
        <path d="M228 500L238 478 232 458 237 455 243 478 232 502zM262 438h12v4h-12zM282 434h10v4h-10zM276 452h6v6h-6zM252 487h6v6h-6zM246 502h8v5h-8zM448 410l15-2v6zM815 315h30v4h-30zM790 355h22v4h-22z" />
      </g>
      <ellipse cx="267" cy="471" rx="14" ry="5" stroke="#fff" />
      {/* Round socket */}
      <path d="M868 290V340C880 400 1000 410 1010 360V290z" fill="#222" />
      <path d="M870 330C890 385 990 385 1010 335M872 345C890 395 990 400 1010 350" stroke="#666" />
      <ellipse cx="940" cy="290" rx="72" ry="42" fill="#000" stroke="#3a3a3a" />
      {/* Selector knobs */}
      <path d="M810 358V430L950 460V358z" fill="url(#knob)" />
      <ellipse cx="880" cy="358" rx="70" ry="37" fill="#444" />
      <path d="M815 365L930 325 948 345 830 385z" fill="#2b2b2b" />
      <path d="M298 460V500C310 545 435 550 447 490V450z" fill="url(#steel)" />
      <path d="M308 375V465C325 500 435 500 447 455V375z" fill="url(#knob)" />
      <ellipse cx="378" cy="377" rx="70" ry="38" fill="#464646" />
      <path d="M315 382L425 345 445 362 330 402z" fill="#2b2b2b" />
      <path d="M325 385L425 352" />
    </g>

    {/* Front console */}
    <g transform="translate(840 440) scale(.34437 .33333)" stroke="#000" strokeWidth="3" fill="none">
      <path
        d="M-411 510C-400 450-350 400-300 375L-68 370 265 455 1130 652C1200 670 1215 690 1215 735L1175 800C1150 860 1030 900 915 880L-190 620-356 570-368 700-411 632z"
        fill="#282828"
      />
      <path
        d="M-373 490C-370 440-340 400-300 385L-68 378 265 462 1125 658C1190 672 1195 695 1180 725L1150 780C1120 830 1030 860 920 835L-330 545C-360 535-373 515-373 490z"
        fill="#232323"
      />
      <path d="M-190 580L-200 620M920 835L915 880M1150 780L1175 800M1187 705L1215 735M1213 700L1208 870" />
      <g fill="#000" stroke="none">
        <path d="M322 490L393 510 355 590 278 572zM268 585L338 600 303 685 228 665zM-14 467L54 485 16 567-58 548zM62 485L131 502 92 583 18 567z" />
      </g>
      <path d="M12 490C-15 496-30 515-27 535M64 547C62 535 70 525 92 523M64 536L54 531M44 533l6 0" stroke="#fff" strokeWidth="6" />
      <path d="M306 535l18 20M340 530l14 22M362 520l-22 10" stroke="#777" />
      <path d="M268 625l4 12M284 625l4 12M300 628l4 10" stroke="#ddd" />
      <path d="M258 648a9 6 0 1 0 .1 0zM285 652a10 8 0 1 0 .1 0zM264 664a13 6 0 1 0 .1 0z" fill="#fff" stroke="none" />
      {whiteButtons.map(([x, y]) => (
        <g key={x}>
          <ellipse cx={x} cy={y + 18} rx="72" ry="46" fill="url(#steel)" />
          <ellipse cx={x} cy={y + 10} rx="71" ry="44" fill="url(#steel)" stroke="#555" strokeWidth="1" />
          <ellipse cx={x} cy={y} rx="53" ry="29" fill="#fff" strokeWidth="6" />
        </g>
      ))}
      {blankCaps.map(([x, y]) => (
        <g key={x}>
          <ellipse cx={x} cy={y + 8} rx="74" ry="45" fill="#1a1a1a" />
          <ellipse cx={x} cy={y} rx="74" ry="45" fill="#222" />
        </g>
      ))}
      <ellipse cx="1087" cy="805" rx="27" ry="17" fill="#1a1a1a" strokeWidth="4" />
      <ellipse cx="1087" cy="809" rx="17" ry="10" fill="#242424" />
    </g>

    {/* Handwheel */}
    <g transform="translate(560 430) scale(.33333)" stroke="#000" strokeWidth="3">
      <path d="M490 490C480 620 800 620 797 490L768 420H525z" fill="url(#steel)" />
      <path d="M490 480C500 595 790 600 797 480M490 492C500 607 790 612 797 492" fill="none" />
      <path d="M525 400V435C540 530 750 530 770 440V400z" fill="url(#steel)" />
      <path d="M525 425C540 515 750 515 768 430" fill="none" />
      <ellipse cx="647" cy="403" rx="122" ry="69" fill="#9c9c9c" />
      <ellipse cx="647" cy="396" rx="116" ry="62" fill="#b8b8b8" strokeWidth="2" />
      <path d="M541 325L539 390C545 408 585 408 590 390L592 325z" fill="url(#steel)" />
      <ellipse cx="566" cy="325" rx="26" ry="13" fill="#b4b4b4" strokeWidth="2" />
    </g>

    {/* Emblem */}
    <g fontFamily="Liberation Sans, sans-serif" fontWeight="700" stroke="#000" fill="#222">
      <ellipse cx="960" cy="737" rx="31" ry="28" fill="#cfcf00" strokeWidth="1.5" />
      <g transform="rotate(5 960 737)">
        <text x="937" y="757" fontSize="60">P</text>
        <text x="956" y="762" fontSize="32">A</text>
      </g>
    </g>

    {/* Grip and head */}
    <g transform="translate(540 160) scale(.33333)" stroke="#000" strokeWidth="3" fill="none">
      <path d="M485 758L450 780 442 815 455 845C500 890 630 900 672 863L692 825 685 785 645 760z" fill="#242424" />
      <path d="M445 822C490 875 640 885 690 830M452 840C500 885 640 890 675 855" />
      <ellipse cx="415" cy="575" rx="15" ry="24" fill="#9a0e0e" />
      <path
        d="M335 438L400 540C440 610 480 700 485 760L490 795C520 842 620 842 644 800L643 760 633 690 605 600C570 500 520 410 445 325L410 378z"
        fill="url(#stick)"
      />
      <path
        d="M245 60C265 48 300 50 320 62L445 190C465 215 475 240 470 265L445 325 410 375 335 438 285 475C260 482 235 478 200 445L120 365C80 320 65 280 75 245L130 155z"
        fill="#1e1e1e"
      />
      <path
        d="M245 70C265 54 300 55 325 68L442 195C465 215 468 240 465 260L440 325C425 360 400 380 370 375 350 370 330 360 315 345L238 275C200 240 190 210 203 160z"
        fill="#232323"
      />
      <path d="M200 155L85 235M240 278L122 365M320 348L198 440M190 165C185 215 200 250 240 290L315 355C340 380 380 398 412 378M272 392C300 415 340 425 370 415M250 408C280 435 310 440 335 438M245 62L200 155" />
      {headButtons.map((button) => (
        <g key={button.x}>
          <ellipse cx={button.x - 12} cy={button.y + 10} rx="32" ry="36" fill="#191919" transform={`rotate(-30 ${button.x} ${button.y})`} />
          <ellipse cx={button.x - 5} cy={button.y + 4} rx="28" ry="32" fill="#262626" transform={`rotate(-30 ${button.x} ${button.y})`} />
          <ellipse cx={button.x} cy={button.y} rx="19" ry="23" fill={button.fill} transform={`rotate(-30 ${button.x} ${button.y})`} />
          <ellipse cx={button.x + 4} cy={button.y - 4} rx="11" ry="13" fill={button.top} strokeWidth="1.5" transform={`rotate(-30 ${button.x} ${button.y})`} />
        </g>
      ))}
    </g>

    {/* Axis triad */}
    <g fontFamily="Liberation Mono, monospace" fontSize="14">
      <path d="M487 1006L450 999" stroke="#d8555c" strokeWidth="3.5" />
      <path d="M434 994L451 994 450 1002z" fill="#c9434b" />
      <path d="M488 1002L490 972" stroke="#2273b5" strokeWidth="4" />
      <path d="M491 960L495 976H485z" fill="#4a7fdc" />
      <circle cx="488" cy="1007" r="7" fill="#e8e07a" />
      <path d="M487 1009L476 1028" stroke="#23803c" strokeWidth="3.5" />
      <path d="M471 1036L472 1023 480 1027z" fill="#2a9a42" />
      <text x="423" y="998" fill="#cc4a50">X</text>
      <text x="487" y="959" fill="#4a74d4">Z</text>
      <text x="464" y="1045" fill="#35a04a">Y</text>
    </g>
  </svg>
);

export default function App() {
  return (
    <div className="flex h-screen flex-col overflow-hidden bg-[#cbcbcb] font-['Noto_Sans',sans-serif]">
      <TitleBar />
      <DocumentTabs />
      <Ribbon />
      <div className="flex min-h-0 flex-1">
        <SidePanel />
        <main className="relative min-w-0 flex-1 bg-linear-to-b from-[#dfdfdf] via-[#c9c9cd] to-[#a7a7b0]">
          <ControlPanelModel />
          <ViewToolbar />
        </main>
      </div>
    </div>
  );
}
